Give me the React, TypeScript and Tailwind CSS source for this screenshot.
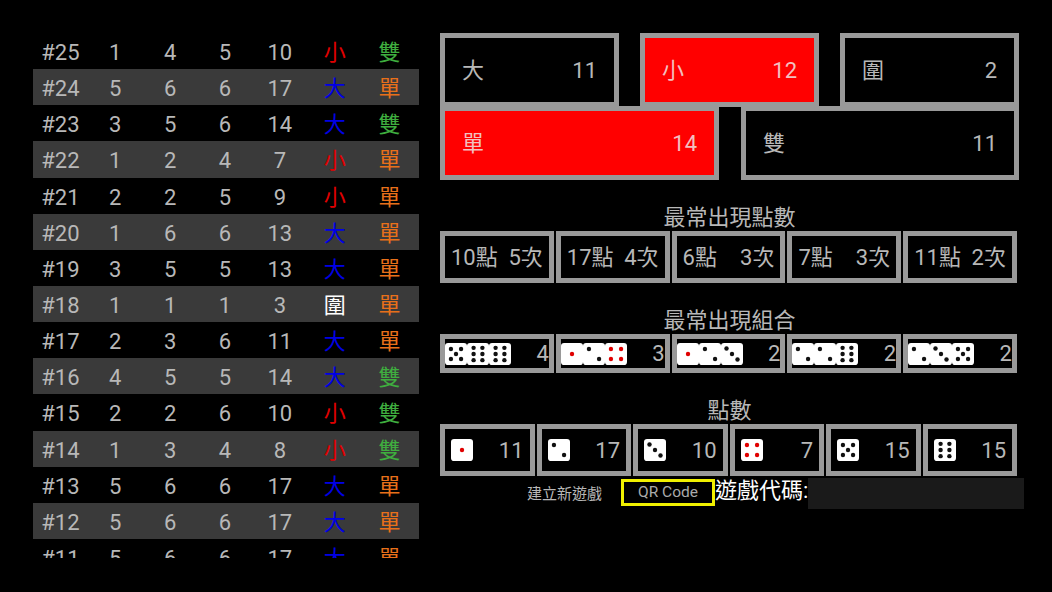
const rows: [string, number, number, number, number, string, string][] = [
	["#25", 1, 4, 5, 10, "小", "雙"],
	["#24", 5, 6, 6, 17, "大", "單"],
	["#23", 3, 5, 6, 14, "大", "雙"],
	["#22", 1, 2, 4, 7, "小", "單"],
	["#21", 2, 2, 5, 9, "小", "單"],
	["#20", 1, 6, 6, 13, "大", "單"],
	["#19", 3, 5, 5, 13, "大", "單"],
	["#18", 1, 1, 1, 3, "圍", "單"],
	["#17", 2, 3, 6, 11, "大", "單"],
	["#16", 4, 5, 5, 14, "大", "雙"],
	["#15", 2, 2, 6, 10, "小", "雙"],
	["#14", 1, 3, 4, 8, "小", "雙"],
	["#13", 5, 6, 6, 17, "大", "單"],
	["#12", 5, 6, 6, 17, "大", "單"],
	["#11", 5, 6, 6, 17, "大", "單"],
];

const sizeColor: Record<string, string> = {
	小: "text-[#e00000]",
	大: "text-[#0000e6]",
	圍: "text-white",
};

const pips: Record<number, [number, number][]> = {
	1: [[50, 50]],
	2: [[27, 27], [73, 73]],
	3: [[25, 25], [50, 50], [75, 75]],
	4: [[27, 27], [73, 27], [27, 73], [73, 73]],
	5: [[27, 27], [73, 27], [50, 50], [27, 73], [73, 73]],
	6: [[30, 22], [70, 22], [30, 50], [70, 50], [30, 78], [70, 78]],
};

const combos: { dice: number[]; count: number }[] = [
	{ dice: [5, 6, 6], count: 4 },
	{ dice: [1, 2, 4], count: 3 },
	{ dice: [1, 2, 3], count: 2 },
	{ dice: [2, 2, 6], count: 2 },
	{ dice: [2, 3, 5], count: 2 },
];

function Die({ n }: { n: number }) {
	const red = n === 1 || n === 4;
	return (
		<svg viewBox="0 0 100 100" className="w-[22px] h-[22px] shrink-0">
			<rect width="100" height="100" rx="14" fill="#fff" />
			{pips[n].map(([x, y]) => (
				<circle key={`${x}-${y}`} cx={x} cy={y} r="10" fill={red ? "#e00000" : "#111"} />
			))}
		</svg>
	);
}

function BigBox({ label, count, active, className }: { label: string; count: number; active?: boolean; className: string }) {
	return (
		<div
			className={`flex items-center justify-between h-[74px] border-[5px] border-[#999] px-[17px] text-[22px] ${
				active ? "bg-[#ff0000] text-[#f2c0c0]" : "bg-black text-[#b8b8b8]"
			} ${className}`}
		>
			<span>{label}</span>
			<span>{count}</span>
		</div>
	);
}

export default function App() {
	return (
		<div
			className="w-[1052px] h-[592px] bg-black flex pt-[33px] pl-[33px] overflow-hidden text-[#b8b8b8]"
			style={{ fontFamily: '"Roboto", "Noto Sans CJK TC", sans-serif' }}
		>
			<div className="w-[386px] h-[525px] overflow-hidden shrink-0">
				{rows.map((r, i) => (
					<div
						key={r[0]}
						className={`grid grid-cols-7 h-[36.15px] items-center text-center text-[22px] leading-none pt-[4px] pr-[2px] ${
							i % 2 === 1 ? "bg-[#3a3a3a]" : ""
						}`}
					>
						<span>{r[0]}</span>
						<span>{r[1]}</span>
						<span>{r[2]}</span>
						<span>{r[3]}</span>
						<span>{r[4]}</span>
						<span className={sizeColor[r[5]]}>{r[5]}</span>
						<span className={r[6] === "雙" ? "text-[#3fae3f]" : "text-[#e8701a]"}>{r[6]}</span>
					</div>
				))}
			</div>

			<div className="ml-[21px] w-[591px] shrink-0">
				<div className="flex gap-[21px]">
					<BigBox label="大" count={11} className="w-[179px]" />
					<BigBox label="小" count={12} active className="w-[179px]" />
					<BigBox label="圍" count={2} className="w-[179px]" />
				</div>
				<div className="flex gap-[22px] -mt-[1px]">
					<BigBox label="單" count={14} active className="w-[279px]" />
					<BigBox label="雙" count={11} className="w-[278px]" />
				</div>

				<div className="w-[579px] mt-[24px] text-center text-[22px] leading-[27px]">最常出現點數</div>
				<div className="flex gap-[2px] w-[577px]">
					{[
						["10點", "5次"],
						["17點", "4次"],
						["6點", "3次"],
						["7點", "3次"],
						["11點", "2次"],
					].map(([a, b]) => (
						<div
							key={a}
							className="flex-1 h-[52px] border-[5px] border-[#999] flex items-center justify-between px-[6px] text-[22px] whitespace-nowrap"
						>
							<span>{a}</span>
							<span>{b}</span>
						</div>
					))}
				</div>

				<div className="w-[579px] mt-[24px] text-center text-[22px] leading-[27px]">最常出現組合</div>
				<div className="flex gap-[2px] w-[577px]">
					{combos.map(({ dice, count }) => (
						<div
							key={dice.join("")}
							className="flex-1 h-[39px] border-[5px] border-[#999] flex items-center justify-between text-[22px]"
						>
							<div className="flex">
								{dice.map((n, i) => (
									<Die key={i} n={n} />
								))}
							</div>
							<span>{count}</span>
						</div>
					))}
				</div>

				<div className="w-[579px] mt-[24px] text-center text-[22px] leading-[27px]">點數</div>
				<div className="flex gap-[2px] w-[577px]">
					{[11, 17, 10, 7, 15, 15].map((c, i) => (
						<div
							key={i}
							className="flex-1 h-[52px] border-[5px] border-[#999] flex items-center justify-between pl-[6px] pr-[6px] text-[22px]"
						>
							<Die n={i + 1} />
							<span>{c}</span>
						</div>
					))}
				</div>

				<div className="flex items-start h-[31px] mt-[2px] w-[584px]">
					<span className="ml-[87px] mt-[5px] w-[94px] text-[15px] text-[#b8b8b8]">建立新遊戲</span>
					<div className="mt-[1px] w-[94px] h-[27px] border-[3px] border-[#f0f000] flex items-center justify-center text-[15.5px] text-[#aaa]">
						QR Code
					</div>
					<span className="text-[22px] leading-[26px] text-white whitespace-nowrap w-[93px]">遊戲代碼:</span>
					<div className="flex-1 h-[31px] bg-[#1a1a1a]" />
				</div>
			</div>
		</div>
	);
}
